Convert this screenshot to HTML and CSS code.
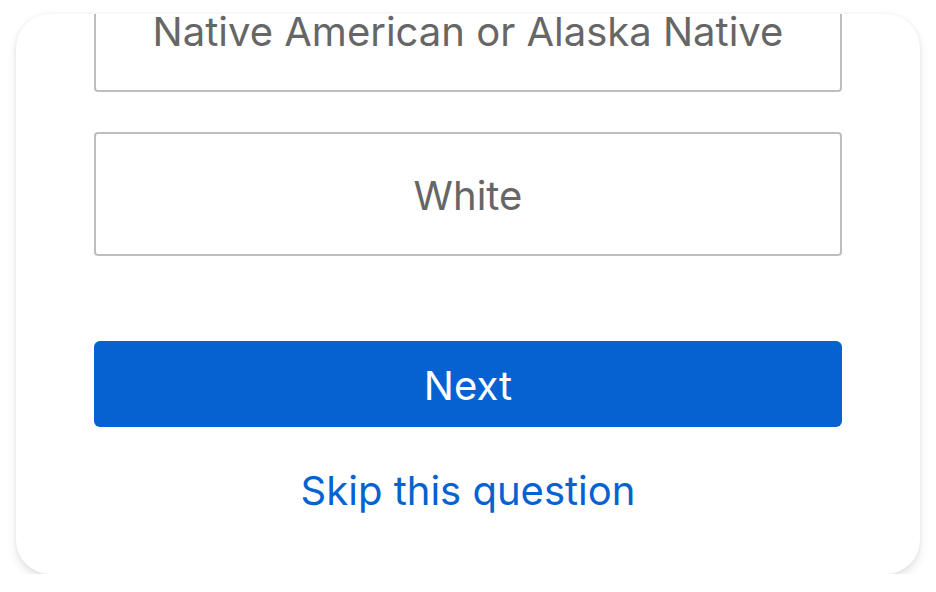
FILE: index.html
```
<!DOCTYPE html>
<html>
<head>
<meta charset="utf-8">
<link rel="stylesheet" href="styles.css">
</head>
<body>
<div class="card">
  <div class="content">
    <div class="options">
      <div class="option">Native American or Alaska Native</div>
      <div class="option">White</div>
    </div>
    <button class="next">Next</button>
    <a class="skip" href="#">Skip this question</a>
  </div>
</div>
</body>
</html>
```
FILE: styles.css
```
html, body {
  margin: 0;
  padding: 0;
  background: #ffffff;
}
body {
  font-family: "Inter", "Noto Sans", sans-serif;
}
.card {
  margin: 14px 16px 0 16px;
  height: 560px;
  background: #ffffff;
  border-radius: 34px;
  box-shadow: 0 5px 10px rgba(0, 0, 0, 0.10), 0 0 4px rgba(0, 0, 0, 0.06);
  overflow: hidden;
  padding: 0 78px;
}
.content {
  margin-top: -46px;
  display: flex;
  flex-direction: column;
}
.options {
  display: flex;
  flex-direction: column;
  gap: 40px;
}
.option {
  height: 124px;
  box-sizing: border-box;
  border: 2px solid #bdbdbd;
  border-radius: 4px;
  padding-top: 3px;
  display: flex;
  align-items: center;
  justify-content: center;
  color: #666666;
  font-size: 40px;
  line-height: 48px;
  font-weight: 400;
}
.next {
  margin-top: 85px;
  height: 86px;
  border: none;
  border-radius: 6px;
  background: #0562d0;
  color: #ffffff;
  font-family: inherit;
  font-size: 40px;
  line-height: 48px;
  padding: 3px 0 0 0;
  font-weight: 400;
}
.skip {
  margin-top: 40px;
  align-self: center;
  color: #0562d0;
  text-decoration: none;
  font-size: 40px;
  line-height: 48px;
}
```
